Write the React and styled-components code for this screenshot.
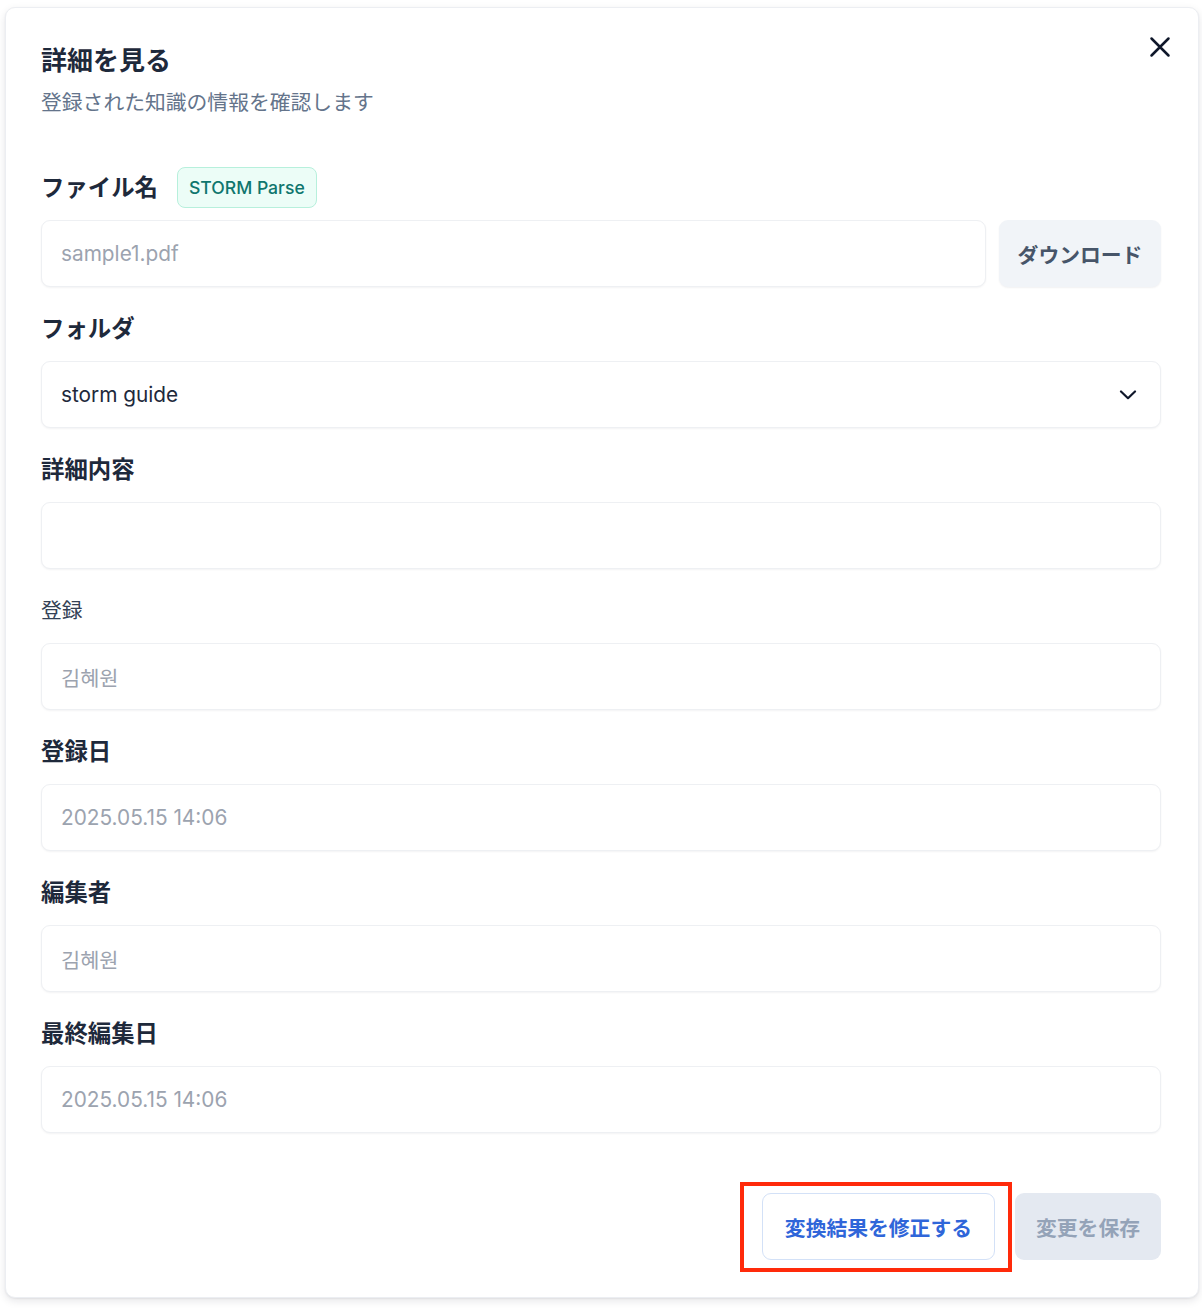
import React, { useState } from "react";
import styled, { createGlobalStyle } from "styled-components";

const GlobalStyle = createGlobalStyle`
  html, body {
    margin: 0;
    padding: 0;
    background: #ffffff;
  }
  body {
    font-family: "Inter", "Noto Sans CJK JP", "Noto Sans CJK KR", sans-serif;
    color: #1e293b;
  }
  * {
    box-sizing: border-box;
  }
`;

const fields = [
  { label: "詳細内容", value: "", kind: "textarea" },
  { label: "登録", value: "김혜원", light: true },
  { label: "登録日", value: "2025.05.15 14:06" },
  { label: "編集者", value: "김혜원" },
  { label: "最終編集日", value: "2025.05.15 14:06" },
];

const CloseIcon = () => (
  <svg width="22" height="22" viewBox="0 0 22 22" fill="none">
    <path
      d="M2.5 2.5L19.5 19.5M19.5 2.5L2.5 19.5"
      stroke="#0f172a"
      strokeWidth="2.5"
      strokeLinecap="round"
    />
  </svg>
);

const ChevronIcon = () => (
  <svg width="18" height="10" viewBox="0 0 18 10" fill="none">
    <path
      d="M2 1.5L9 8.2L16 1.5"
      stroke="#0f172a"
      strokeWidth="2.2"
      strokeLinecap="round"
      strokeLinejoin="round"
    />
  </svg>
);

const App = () => {
  const [folder] = useState("storm guide");
  return (
    <>
      <GlobalStyle />
      <Dialog>
        <CloseButton aria-label="close">
          <CloseIcon />
        </CloseButton>
        <Header>
          <Title>詳細を見る</Title>
          <Subtitle>登録された知識の情報を確認します</Subtitle>
        </Header>

        <Form>
          <Field gap={12}>
            <LabelRow>
              <Label>ファイル名</Label>
              <Badge>STORM Parse</Badge>
            </LabelRow>
            <InputRow>
              <Box>
                <Value>sample1.pdf</Value>
              </Box>
              <GhostButton>ダウンロード</GhostButton>
            </InputRow>
          </Field>

          <Field>
            <Label>フォルダ</Label>
            <Box>
              <Value dark>{folder}</Value>
              <ChevronIcon />
            </Box>
          </Field>

          {fields.map((f) => (
            <Field key={f.label}>
              <Label light={f.light}>{f.label}</Label>
              <Box>
                <Value>{f.value}</Value>
              </Box>
            </Field>
          ))}
        </Form>

        <Footer>
          <Highlight>
            <OutlineButton>変換結果を修正する</OutlineButton>
          </Highlight>
          <DisabledButton disabled>変更を保存</DisabledButton>
        </Footer>
      </Dialog>
    </>
  );
};

export default App;

const Dialog = styled.div`
  position: relative;
  width: 1194px;
  margin: 7px 3px 10px 5px;
  padding: 35px 37px 37px 35px;
  background: #fff;
  border: 1px solid #eceef2;
  border-radius: 10px;
  box-shadow: 0 3px 8px rgba(15, 23, 42, 0.1), 0 1px 2px rgba(15, 23, 42, 0.06);
`;

const CloseButton = styled.button`
  position: absolute;
  top: 26px;
  right: 25px;
  width: 26px;
  height: 26px;
  padding: 0;
  border: none;
  background: transparent;
  display: flex;
  align-items: center;
  justify-content: center;
  cursor: pointer;
`;

const Header = styled.div`
  display: flex;
  flex-direction: column;
  gap: 9px;
`;

const Title = styled.h2`
  margin: 0;
  font-size: 26px;
  line-height: 36px;
  font-weight: 700;
  color: #1e293b;
`;

const Subtitle = styled.p`
  margin: 0;
  font-size: 20.8px;
  line-height: 30px;
  color: #64748b;
`;

const Form = styled.div`
  margin-top: 49px;
  display: flex;
  flex-direction: column;
  gap: 26px;
`;

const Field = styled.div`
  display: flex;
  flex-direction: column;
  gap: ${(p) => p.gap ?? 16}px;
`;

const LabelRow = styled.div`
  display: flex;
  align-items: center;
  gap: 19px;
  height: 41px;
`;

const Label = styled.div`
  font-size: ${(p) => (p.light ? "20.8px" : "23.4px")};
  font-weight: ${(p) => (p.light ? 400 : 700)};
  line-height: 32px;
  color: ${(p) => (p.light ? "#334155" : "#1e293b")};
`;

const Badge = styled.span`
  display: inline-flex;
  align-items: center;
  height: 41px;
  padding: 0 11px;
  border-radius: 8px;
  background: #ecfdf7;
  border: 1px solid #b7f0dc;
  color: #0f766e;
  font-size: 17.6px;
  font-weight: 500;
`;

const InputRow = styled.div`
  display: flex;
  gap: 13px;
`;

const Box = styled.div`
  flex: 1 1 auto;
  height: 67px;
  display: flex;
  align-items: center;
  justify-content: space-between;
  padding: 0 23px 0 19px;
  border: 1px solid #eef0f3;
  border-radius: 9px;
  background: #fff;
  box-shadow: 0 1px 2px rgba(15, 23, 42, 0.05);
`;

const Value = styled.span`
  font-size: 20.8px;
  color: ${(p) => (p.dark ? "#1e293b" : "#9ca3af")};
`;

const GhostButton = styled.button`
  flex: 0 0 162px;
  height: 67px;
  padding: 0;
  border: none;
  border-radius: 9px;
  background: #f1f4f8;
  color: #475569;
  font-family: inherit;
  font-size: 20.8px;
  font-weight: 700;
  box-shadow: 0 1px 2px rgba(15, 23, 42, 0.06);
  cursor: pointer;
`;

const Footer = styled.div`
  margin-top: 60px;
  display: flex;
  justify-content: flex-end;
  gap: 20px;
`;

const Highlight = styled.div`
  position: relative;
  &::after {
    content: "";
    position: absolute;
    top: -11px;
    left: -22px;
    right: -17px;
    bottom: -12px;
    border: 4px solid #ff2a0a;
    pointer-events: none;
  }
`;

const OutlineButton = styled.button`
  height: 67px;
  padding: 0 22px;
  border: 1px solid #d3e1f7;
  border-radius: 9px;
  background: #fff;
  color: #2f66d9;
  font-family: inherit;
  font-size: 20.8px;
  font-weight: 700;
  cursor: pointer;
`;

const DisabledButton = styled.button`
  height: 67px;
  padding: 0 21px;
  border: none;
  border-radius: 9px;
  background: #e4e9f1;
  color: #94a3b8;
  font-family: inherit;
  font-size: 20.8px;
  font-weight: 700;
`;
